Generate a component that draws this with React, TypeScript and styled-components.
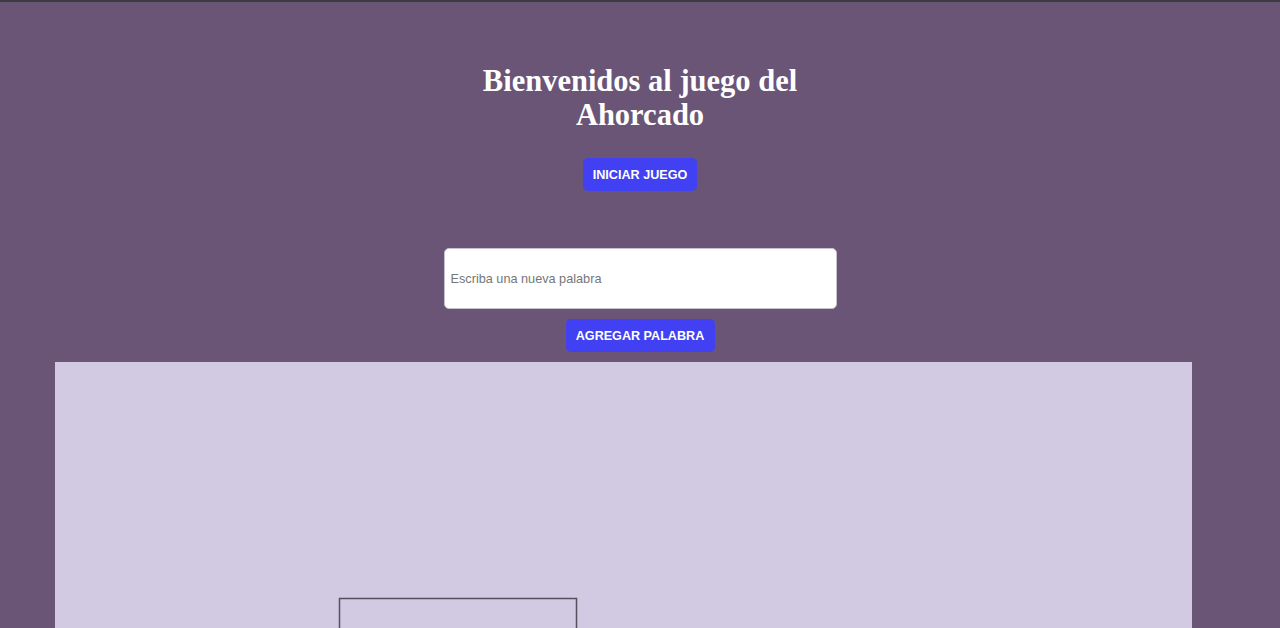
import React from "react";
import styled, { createGlobalStyle } from "styled-components";

const Global = createGlobalStyle`
  html, body {
    margin: 0;
    padding: 0;
    background: #6a5577;
    overflow: hidden;
  }
  body {
    font-family: "Liberation Serif", serif;
  }
`;

const Page = styled.div`
  min-height: 628px;
  background: #6a5577;
  border-top: 2px solid #3b3b3f;
  box-sizing: border-box;
  display: flex;
  flex-direction: column;
  align-items: center;
  padding-top: 62px;
`;

const Title = styled.h1`
  margin: 0;
  width: 340px;
  font-family: "Liberation Serif", serif;
  font-weight: 700;
  font-size: 30.5px;
  line-height: 34px;
  color: #ffffff;
  text-align: center;
`;

const Button = styled.button<{ $size?: number }>`
  height: 33px;
  padding: 0;
  border: none;
  border-radius: 5px;
  background: #4141f3;
  color: #ffffff;
  font-family: "Liberation Sans", Arial, sans-serif;
  font-weight: 700;
  font-size: ${(p) => p.$size ?? 12}px;
  white-space: nowrap;
  cursor: pointer;
`;

const StartButton = styled(Button)`
  margin-top: 26px;
  width: 114px;
`;

const AddButton = styled(Button)`
  margin-top: 10px;
  width: 149px;
`;

const WordInput = styled.input`
  margin-top: 57px;
  width: 393px;
  height: 61px;
  box-sizing: border-box;
  border: 1px solid #c8c2cc;
  border-radius: 5px;
  background: #ffffff;
  padding: 0 6px;
  font-family: "Liberation Sans", Arial, sans-serif;
  font-size: 12.7px;
  color: #333;
  &::placeholder {
    color: #767676;
  }
`;

const BoardRow = styled.div`
  align-self: stretch;
  margin-top: 10px;
  padding-left: 55px;
`;

const Board = styled.div`
  width: 1137px;
  height: 266px;
  background: #d2c9e3;
  overflow: hidden;
`;

export default function App() {
  return (
    <>
      <Global />
      <Page>
        <Title>Bienvenidos al juego del Ahorcado</Title>
        <StartButton $size={12.6}>INICIAR JUEGO</StartButton>
        <WordInput placeholder="Escriba una nueva palabra" />
        <AddButton $size={12.6}>AGREGAR PALABRA</AddButton>
        <BoardRow>
          <Board>
            <svg width="1137" height="266" viewBox="0 0 1137 266">
              <rect
                x="284.5"
                y="236.5"
                width="237"
                height="100"
                fill="none"
                stroke="#55505c"
                strokeWidth="1.5"
              />
            </svg>
          </Board>
        </BoardRow>
      </Page>
    </>
  );
}
